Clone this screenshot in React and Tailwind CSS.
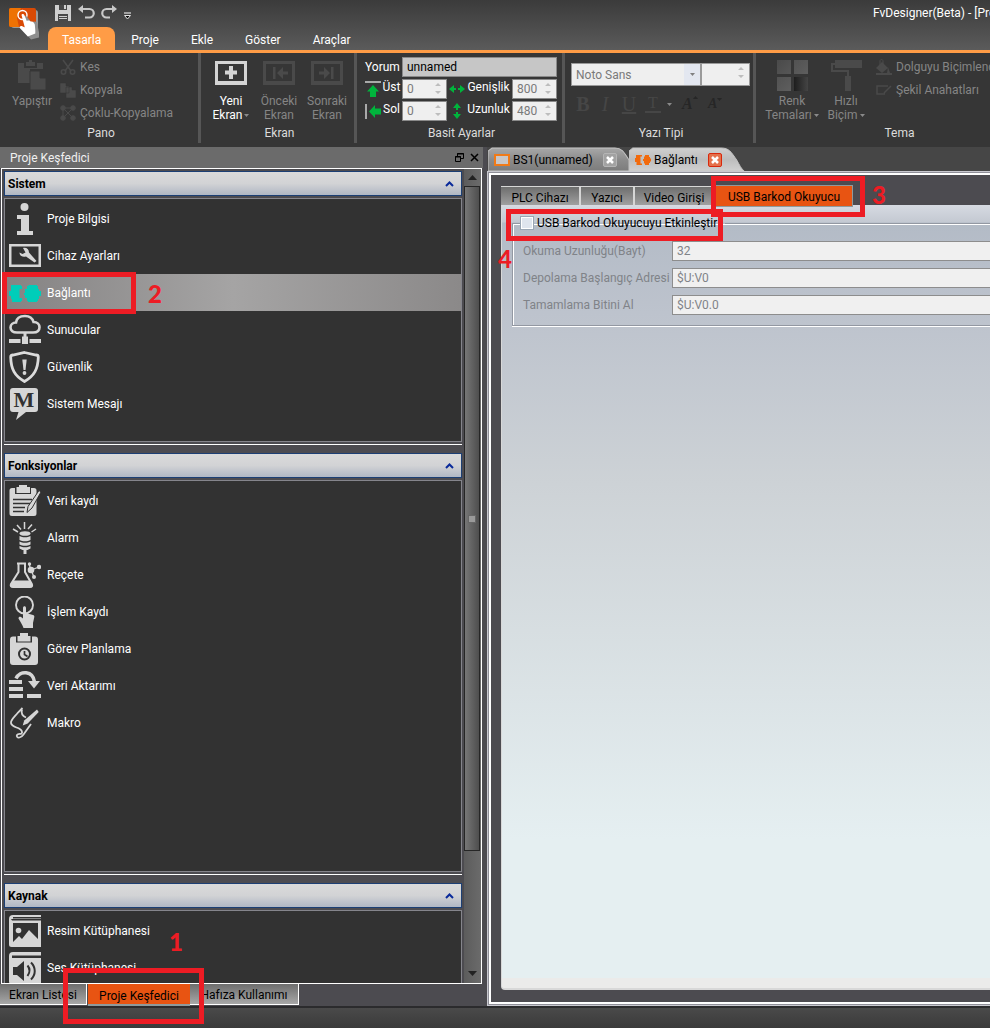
import React, { useState } from "react";
import clsx from "clsx";

const Icon = ({ children, size = 32, className }) => (
  <svg width={size} height={size} viewBox={`0 0 ${size} ${size}`} fill="#d6d6d6" className={clsx("shrink-0", className)} aria-hidden="true">
    {children}
  </svg>
);

/* PROJECT EXPLORER ICONS */
const icons = {
  info: (
    <Icon>
      <circle cx="15.5" cy="4" r="4" />
      <path d="M8 12h12v16h4v4H8v-4h4V16H8z" />
    </Icon>
  ),
  device: (
    <Icon>
      <path d="M0 4h32v23H0zM2.5 6.500v18h27v-18z" fillRule="evenodd" />
      <path d="M14 8c3-1 6 1 6 4.500l7.500 8.500-2 1.500L17 16.500c-3.500 1-6.500-.5-6.500-4l3 1.500 3-1.500z" />
    </Icon>
  ),
  link: (
    <Icon>
      <path fill="#00cdb9" d="M2 8h10v1h1v3h-2.500v9H13v3H12v1H3v-3H2v-3H0v-5h2zM20 8h8v1h1v3h1v2h2v5h-2v3h-1v2h-1v1h-9v-1h-1v-3h-2v-3h-1v-2h1v-4h2v-3h1z" />
    </Icon>
  ),
  server: (
    <Icon>
      <path d="M8 18.500c-4 0-6.500-2-6.500-5S4 8.500 7 8.500c.5-4 4-6.500 9-6.500s7.500 2.500 8.500 6c4 0 6 2.500 6 5.200 0 3.300-2.500 5.300-6.500 5.300z" fill="none" stroke="#d6d6d6" strokeWidth="2.600" />
      <path d="M14.500 19h3v4h-3zM0 25h11.500v4H0zM13 22.500h6V30h-6zM20.500 25H32v4H20.500z" />
    </Icon>
  ),
  shield: (
    <Icon>
      <path d="M15.500 1.500 27 4c1.500 0 2.300.5 2.300 2-.3 12-4 19-13.800 24.500C5.500 25 2 18 1.700 6c0-1.500.8-2 2.300-2z" fill="none" stroke="#dcdcdc" strokeWidth="2.800" />
      <path d="M13.300 8.500h4.400L16.500 19h-2z" />
      <circle cx="15.500" cy="22" r="1.900" />
    </Icon>
  ),
  message: (
    <Icon>
      <path d="M4 0h22a3 3 0 0 1 3 3v18a3 3 0 0 1-3 3H17L7 32l2.500-8H4a3 3 0 0 1-3-3V3a3 3 0 0 1 3-3z" />
      <text x="15" y="19" textAnchor="middle" fill="#323232" fontFamily="Liberation Serif, serif" fontWeight="bold" fontSize="22">M</text>
    </Icon>
  ),
  log: (
    <Icon>
      <path d="M3 3h3v6h16V3h3a2.500 2.500 0 0 1 2.500 2.500v23A2.500 2.500 0 0 1 25 31H3a2.500 2.500 0 0 1-2.500-2.500v-23A2.500 2.500 0 0 1 3 3z" />
      <path d="M7.500 2H10V0h8v2h3v6H7.500z" />
      <path d="M4 14.500h19M4 18.500h17M4 22.500h12M4 26.500h11" stroke="#323232" strokeWidth="1.500" />
      <path d="m30 5.500 2 1.500-9 16-5 4.500 1-6z" stroke="#323232" strokeWidth="1" />
    </Icon>
  ),
  alarm: (
    <Icon>
      <path d="m4 7 5 3M8 3l4 4.500M15.500 0v7M23 2.500 19 7M27 7l-4.500 3" stroke="#d6d6d6" strokeWidth="1.500" />
      <ellipse cx="16" cy="11.500" rx="5.500" ry="2.300" />
      <path d="M10.500 14c3 1.800 8 1.800 11 0v4c-3 1.800-8 1.800-11 0zM10.500 19.500c3 1.800 8 1.800 11 0v3c-3 1.800-8 1.800-11 0zM10.500 24c3 1.800 8 1.800 11 0v2.500L18.500 28h-1v4h-3v-4h-1l-3-1.500z" />
    </Icon>
  ),
  recipe: (
    <Icon>
      <path d="M8 4.500h9M9.500 5v8L2 25c-.8 1.800 0 3 2 3h17c2 0 2.600-1.200 1.800-3L16 13V5" fill="none" stroke="#d6d6d6" strokeWidth="2" />
      <path d="M4 21.500h17.500l2 5c0 1-1 1.500-2 1.500H3.500c-1.500 0-2-1-1.500-2z" />
      <path d="m20 5 2 6 8-3M22 11l3 7" stroke="#d6d6d6" strokeWidth="1.300" fill="none" />
      <circle cx="20.500" cy="5" r="1.700" />
      <circle cx="22" cy="11" r="3.300" />
      <circle cx="30" cy="8" r="2.200" />
      <circle cx="25" cy="18" r="2" />
    </Icon>
  ),
  touch: (
    <Icon>
      <circle cx="15.500" cy="9" r="8.500" fill="none" stroke="#d6d6d6" strokeWidth="1.900" />
      <path d="M14 12c0-2.500 3-2.500 3 0v5l7 2c1 .3 1.500 1 1.300 2L24 27v5h-9.500c-1-3-3-6-5-9.500 0-2 2-2.500 4.500 0z" />
    </Icon>
  ),
  schedule: (
    <Icon>
      <path d="M4 3.500h3v6h16v-6h3a3 3 0 0 1 3 3V29a3 3 0 0 1-3 3H4a3 3 0 0 1-3-3V6.500a3 3 0 0 1 3-3z" />
      <path d="M8.500 3H11V0h8v3h2.500v5.500h-13z" />
      <circle cx="15.500" cy="21" r="5.500" fill="none" stroke="#323232" strokeWidth="2" />
      <path d="M15.500 18v3.500l3 2" fill="none" stroke="#323232" strokeWidth="1.700" />
    </Icon>
  ),
  transfer: (
    <Icon>
      <path d="M0 10h13v4H0zM0 17h14v4H0zM0 24h14v4H0zM18 24h14v4H18z" />
      <path d="M7 8.500C11 0 24 .5 25.500 12" fill="none" stroke="#d6d6d6" strokeWidth="3.500" />
      <path d="M19 11h12l-6 7.500z" />
    </Icon>
  ),
  macro: (
    <Icon>
      <path d="M13.500 1 9 5.500C6 9.500 1.500 13 2 16c.5 3.500 5 4 8 5.500 2.500 1.500 4 3.500 2.500 5-1 .8-3.500 0-4.500 1.500-.8 1.500.5 3 2.500 2.500s3-1.500 4-3l7.500-10.500M13 2.500c-1 3.500.5 6.500 4 8" fill="none" stroke="#d6d6d6" strokeWidth="1.800" />
      <path d="m28 2.500 1.700 2.500-11 11.500-5 2 1.500-5z" />
    </Icon>
  ),
  image: (
    <Icon>
      <path d="M4 0h28v2H4v1.500h28V32H2.500A2.500 2.500 0 0 1 0 29.500V4a4 4 0 0 1 4-4zM4 8v19h25V8z" fillRule="evenodd" />
      <path d="M2 4h30v1.500H3z" fill="#323232" />
      <circle cx="9.500" cy="15.500" r="2.800" />
      <path d="m4 27 6-6 3 3 7-9 9 9v4H4z" />
    </Icon>
  ),
  sound: (
    <Icon>
      <path d="M4 0h28v32H2.500A2.500 2.500 0 0 1 0 29.500V4a4 4 0 0 1 4-4z" />
      <path d="M3 3.500h29V6H3z" fill="#323232" />
      <path d="M4 15h4l7-6v20l-7-6H4z" fill="#323232" />
      <path d="M18.500 13.500c2.500 3 2.500 7 0 10.500M22 10.500c5 5 5 12 0 17" fill="none" stroke="#323232" strokeWidth="2" />
    </Icon>
  )
};

const sections = [
  {
    title: "Sistem",
    pad: "pb-[19px]",
    items: [
      { icon: "info", label: "Proje Bilgisi" },
      { icon: "device", label: "Cihaz Ayarları" },
      { icon: "link", label: "Bağlantı", active: true },
      { icon: "server", label: "Sunucular" },
      { icon: "shield", label: "Güvenlik" },
      { icon: "message", label: "Sistem Mesajı" }
    ]
  },
  {
    title: "Fonksiyonlar",
    pad: "pb-[130px]",
    items: [
      { icon: "log", label: "Veri kaydı" },
      { icon: "alarm", label: "Alarm" },
      { icon: "recipe", label: "Reçete" },
      { icon: "touch", label: "İşlem Kaydı" },
      { icon: "schedule", label: "Görev Planlama" },
      { icon: "transfer", label: "Veri Aktarımı" },
      { icon: "macro", label: "Makro" }
    ]
  },
  {
    title: "Kaynak",
    pad: "pb-4",
    items: [
      { icon: "image", label: "Resim Kütüphanesi" },
      { icon: "sound", label: "Ses Kütüphanesi" }
    ]
  }
];

const CalloutNumber = ({ children, className }) => (
  <span className={clsx("absolute z-20 font-['Lato',sans-serif] text-2xl leading-6 font-black text-[#ed1c24] pointer-events-none", className)}>
    {children}
  </span>
);

/* Numbered red frame laid over the control it points at */
const Callout = ({ number, frame, numberAt }) => (
  <>
    <span className={clsx("absolute z-20 border-[5px] border-[#ed1c24] pointer-events-none", frame)} />
    {number && <CalloutNumber className={numberAt}>{number}</CalloutNumber>}
  </>
);

const Caret = ({ className }) => (
  <svg width="5" height="3" viewBox="0 0 5 3" fill="currentColor" className={clsx("inline-block", className)} aria-hidden="true">
    <path d="M0 0h5L2.500 3z" />
  </svg>
);

const SpinArrows = () => (
  <svg width="6" height="11" viewBox="0 0 6 11" fill="#bdbdbd" className="absolute right-1.5 top-1" aria-hidden="true">
    <path d="M3 0l3 3H0zM0 8h6l-3 3z" />
  </svg>
);

const RibbonGroup = ({ title, className, children }) => (
  <section className={clsx("flex flex-col shrink-0 border-r-[3px] border-[#565656] h-[90px]", className)}>
    <div className="flex-1 min-h-0">{children}</div>
    <h2 className="h-5 leading-5 pl-1 text-center text-[#dcdcdc]">{title}</h2>
  </section>
);

const BigButton = ({ icon, lines, caret, enabled, className }) => (
  <button type="button" disabled={!enabled} className={clsx("flex flex-col items-center w-12 leading-[14px]", enabled ? "text-white" : "text-[#858585]", className)}>
    <span className="h-10 pt-1.5">{icon}</span>
    <span className="whitespace-nowrap">{lines[0]}</span>
    {lines[1] && (
      <span className="whitespace-nowrap">
        {lines[1]}
        {caret && <Caret className="ml-0.5 mb-px text-[#8a8a8a]" />}
      </span>
    )}
  </button>
);

const SmallButton = ({ icon, label }) => (
  <button type="button" disabled className="flex items-center gap-1 h-[23px] text-[#858585] whitespace-nowrap">
    {icon}
    {label}
  </button>
);

const SpinField = ({ id, label, icon, value, wide }) => (
  <div className="flex items-center h-[22px]">
    {icon}
    <label htmlFor={id} className={clsx("pb-1 text-white text-center whitespace-nowrap", wide ? "w-[47px]" : "w-[21px]")}>{label}</label>
    <span className="relative block">
      <input id={id} type="text" defaultValue={value} disabled className="block w-[45px] h-5 px-1 bg-[#efefef] border border-[#8a8a8a] text-[#7a7a7a]" />
      <SpinArrows />
    </span>
  </div>
);

const TitleBar = () => {
  const [tab, setTab] = useState("Tasarla");
  return (
    <header className="relative shrink-0 h-[53px] bg-linear-to-b from-[#3b3b3b] to-[#5b5b5b] border-b-[3px] border-[#ff9c46] flex flex-col justify-between text-white">
      <svg width="34" height="36" viewBox="0 0 34 36" className="absolute left-2 top-1.5" aria-hidden="true">
        <rect x="3" y="4" width="27" height="18" rx="3" fill="#9a9a9a" />
        <rect x="1" y="2" width="27" height="19" rx="2" fill="#d94a05" />
        <path d="M3 2h10L9 12l2 9H3a2 2 0 0 1-2-2V4a2 2 0 0 1 2-2z" fill="#ee7203" />
        <circle cx="14.500" cy="9" r="4.500" fill="none" stroke="#fff" strokeWidth="1.400" />
        <path d="M16 11c1-2 3-1 4 1l3 4 4-.5c2 0 3 3 3 6l1 5v5l-8 2-8-9c-1-2 1-3 3-1.500l3 2z" fill="#8f8f8f" />
        <path d="M13.500 9c0-1.500 2.300-1.500 2.800 0l2.500 6c2-1 3 0 4 .5 2-.5 3.500 1 4 3l.5 6v3l-7.500 3-8-8.500c-.5-1.800 1-2.500 3-1.500l2 1z" fill="#fff" />
      </svg>
      <div className="flex items-center h-[26px] pl-[55px]">
        <svg width="76" height="18" viewBox="0 0 76 18" className="shrink-0" aria-label="Hızlı erişim">
          <path d="M0 1h16v16H0z" fill="#cfcfcf" />
          <path d="M4 1h8v5H4zM3 10h10v7H3z" fill="#484848" />
          <path d="M9 1h2v4H9zM4 12h8v1H4zM4 14h8v1H4z" fill="#cfcfcf" />
          <path d="M27 5h7.500a4.200 4.200 0 0 1 0 8.500H30M59 5h-7.500a4.200 4.200 0 0 0 0 8.500H55" fill="none" stroke="#c8c8c8" strokeWidth="2.200" />
          <path d="M23 5 28 1v8zM62 5 57 1v8z" fill="#c8c8c8" />
          <path d="M69 9h7" stroke="#fff" />
          <path d="M69.500 11.500h6l-3 3.500z" stroke="#e0e0e0" fill="#111" />
        </svg>
        <h1 className="ml-auto w-[117px] overflow-hidden whitespace-nowrap">FvDesigner(Beta) - [Proje</h1>
      </div>
      <nav className="flex h-[23px] pl-12">
        {["Tasarla", "Proje", "Ekle", "Göster", "Araçlar"].map((name) => (
          <button
            key={name}
            type="button"
            onClick={() => setTab(name)}
            className={clsx("leading-[26px]", tab === name ? "px-3.5 bg-[#ff9c46] rounded-t-lg" : "px-4")}
          >
            {name}
          </button>
        ))}
      </nav>
    </header>
  );
};

const dim = "#4a4a4a";

const Ribbon = () => (
  <div className="shrink-0 h-[94px] bg-[#363636] flex items-start overflow-hidden">
    {/* CLIPBOARD */}
    <RibbonGroup title="Pano" className="w-[201px]">
      <div className="flex">
        <BigButton
          className="ml-2 pt-px"
          lines={["Yapıştır"]}
          icon={
            <svg width="28" height="30" viewBox="0 0 28 30" fill={dim}>
              <path d="M0 3h6v5h13V3h6v6H12v14H0zM8 2h3V0h3v2h3v4H8z" />
              <path d="M12 11h10v7h6v12H12z" stroke="#363636" />
            </svg>
          }
        />
        <div className="flex flex-col ml-1 pt-0.5">
          <SmallButton
            label="Kes"
            icon={
              <svg width="16" height="16" viewBox="0 0 16 16" fill="none" stroke={dim} strokeWidth="1.600">
                <path d="m3 1 8 11M13 1 5 12" />
                <circle cx="3.500" cy="13" r="2.200" />
                <circle cx="12.500" cy="13" r="2.200" />
              </svg>
            }
          />
          <SmallButton
            label="Kopyala"
            icon={
              <svg width="16" height="16" viewBox="0 0 16 16" fill={dim}>
                <path d="M0 1h6v3h3v7H0zM6 5h6v3h4v8H6z" stroke="#363636" strokeWidth=".6" />
              </svg>
            }
          />
          <SmallButton
            label="Çoklu-Kopyalama"
            icon={
              <svg width="16" height="16" viewBox="0 0 16 16" fill={dim} stroke={dim}>
                <path d="M3 3h10M3 13 13 3M3 3v10M3 3l10 10" />
                <circle cx="3" cy="3" r="2.300" />
                <circle cx="13" cy="3" r="2.300" />
                <circle cx="3" cy="13" r="2.300" />
                <circle cx="13" cy="13" r="2.300" />
              </svg>
            }
          />
        </div>
      </div>
    </RibbonGroup>

    {/* SCREEN */}
    <RibbonGroup title="Ekran" className="w-[156px]">
      <div className="flex pl-1.5 pt-px">
        <BigButton
          enabled
          caret
          lines={["Yeni", "Ekran"]}
          icon={
            <svg width="32" height="25" viewBox="0 0 32 25" fill="#d4d4d4">
              <path d="M0 1h32v24H0zM3 4v17h26V4z" fillRule="evenodd" />
              <path d="M14 6h4v4.500h4v4h-4V19h-4v-4.500h-4v-4h4z" />
            </svg>
          }
        />
        <BigButton
          lines={["Önceki", "Ekran"]}
          icon={
            <svg width="32" height="25" viewBox="0 0 32 25" fill={dim}>
              <path d="M0 1h32v24H0zM3 4v17h26V4z" fillRule="evenodd" />
              <path d="M10 7h2.500v12H10zM14 13l6-6v4.500h5v3h-5V19z" />
            </svg>
          }
        />
        <BigButton
          lines={["Sonraki", "Ekran"]}
          icon={
            <svg width="32" height="25" viewBox="0 0 32 25" fill={dim}>
              <path d="M0 1h32v24H0zM3 4v17h26V4z" fillRule="evenodd" />
              <path d="M20 7h2.500v12H20zM19 13l-6-6v4.500H8v3h5V19z" />
            </svg>
          }
        />
      </div>
    </RibbonGroup>

    {/* BASIC SETTINGS */}
    <RibbonGroup title="Basit Ayarlar" className="w-[208px]">
      <div className="pl-2 pt-[3px]">
        <div className="flex items-center h-[22px]">
          <label htmlFor="comment" className="w-[37px] text-white">Yorum</label>
          <input id="comment" type="text" defaultValue="unnamed" className="w-[155px] h-5 px-1 bg-[#c6c6c6] border border-[#8a8a8a] text-black" />
        </div>
        <div className="flex gap-0.5">
          <div>
            <SpinField id="top" label="Üst" value="0" icon={
              <svg width="16" height="17" viewBox="0 0 16 17"><path d="M0 0h16v2H0z" fill="#a9a9a9" /><path d="M8 4l6 6.500h-3V16H5v-5.500H2z" fill="#00b43c" /></svg>
            } />
            <SpinField id="left" label="Sol" value="0" icon={
              <svg width="16" height="17" viewBox="0 0 16 17"><path d="M0 1h2v15H0z" fill="#a9a9a9" /><path d="M4 8.500 10 2v3.500h6v6h-6V15z" fill="#00b43c" /></svg>
            } />
          </div>
          <div>
            <SpinField wide id="width" label="Genişlik" value="800" icon={
              <svg width="16" height="16" viewBox="0 0 16 16" fill="#00b43c"><path d="M0 8l5-4v3h2v2H5v3zM16 8l-5-4v3H9v2h2v3z" /></svg>
            } />
            <SpinField wide id="height" label="Uzunluk" value="480" icon={
              <svg width="16" height="16" viewBox="0 0 16 16" fill="#00b43c"><path d="M8 0l4 5H9v2H7V5H4zM8 16l4-5H9V9H7v2H4z" /></svg>
            } />
          </div>
        </div>
      </div>
    </RibbonGroup>

    {/* FONT */}
    <RibbonGroup title="Yazı Tipi" className="w-[191px]">
      <div className="pl-1.5 pt-2.5">
        <div className="flex">
          <span className="relative block">
            <select disabled aria-label="Yazı tipi" className="block appearance-none w-[130px] h-[23px] px-1 bg-[#efefef] border border-[#9a9a9a] text-[#7a7a7a] opacity-100">
              <option>Noto Sans</option>
            </select>
            <span className="absolute right-px top-px w-4 h-[21px] bg-[#e3e7f0] flex items-center justify-center text-[#808080]">
              <Caret />
            </span>
          </span>
          <span className="relative block">
            <input type="text" disabled aria-label="Yazı boyutu" className="block w-[49px] h-[23px] px-1 bg-[#efefef] border border-[#9a9a9a]" />
            <SpinArrows />
          </span>
        </div>
        <div className="flex items-center gap-1.5 h-9 pl-1 font-['Liberation_Serif',serif] text-xl text-[#464646]">
          <button type="button" disabled className="w-4 font-bold">B</button>
          <button type="button" disabled className="w-4 italic">I</button>
          <button type="button" disabled className="w-5 underline">U</button>
          <button type="button" disabled className="flex items-center gap-1.5 text-base">
            <span className="border-b-2 border-current w-4 leading-4">T</span>
            <Caret className="text-[#8a8a8a]" />
          </button>
          <button type="button" disabled className="flex w-5 ml-1 italic font-bold text-base text-[#262626]">
            A
            <Caret className="rotate-180 mt-1" />
          </button>
          <button type="button" disabled className="flex w-4 italic font-bold text-sm text-[#262626]">
            A
            <Caret className="mt-1" />
          </button>
        </div>
      </div>
    </RibbonGroup>

    {/* THEME */}
    <RibbonGroup title="Tema" className="w-[286px]">
      <div className="flex gap-1.5 pl-3">
        <BigButton
          caret
          className="pt-px"
          lines={["Renk", "Temaları"]}
          icon={
            <svg width="31" height="31" viewBox="0 0 31 31">
              <defs>
                <linearGradient id="tile" x1="0" y1="0" x2="1" y2="1"><stop offset="0" stopColor="#4a4a4a" /><stop offset="1" stopColor="#666" /></linearGradient>
                <linearGradient id="tileDark" x1="0" y1="0" x2="1" y2="0"><stop offset="0" stopColor="#1e1e1e" /><stop offset="1" stopColor="#444" /></linearGradient>
              </defs>
              <path d="M0 0h14v14H0zM17 0h14v14H17zM0 17h14v14H0z" fill="url(#tile)" />
              <path d="M17 17h14v14H17z" fill="url(#tileDark)" />
            </svg>
          }
        />
        <BigButton
          caret
          className="pt-px"
          lines={["Hızlı", "Biçim"]}
          icon={
            <svg width="32" height="31" viewBox="0 0 32 31" fill={dim}>
              <path d="M5 0h27v8H5zM15 16h6v15h-6z" />
              <path d="M5 4H2v7h16v5" fill="none" stroke={dim} strokeWidth="2" />
            </svg>
          }
        />
        <div className="flex flex-col pt-0.5">
          <SmallButton
            label="Dolguyu Biçimlendir"
            icon={
              <svg width="16" height="16" viewBox="0 0 16 16" fill={dim}>
                <path d="m0 9 6-6 6 6-6 5zM12 8l2 6h-3zM0 14h16v2H0z" />
                <path d="M4 6V2c0-2 3-2 3 0v3" fill="none" stroke={dim} />
              </svg>
            }
          />
          <SmallButton
            label="Şekil Anahatları"
            icon={
              <svg width="16" height="16" viewBox="0 0 16 16" fill="none" stroke={dim} strokeWidth="1.500">
                <path d="M9 12H1V4h11M8 11l7-7" />
              </svg>
            }
          />
        </div>
      </div>
    </RibbonGroup>
  </div>
);

const SectionHeader = ({ title }) => (
  <h3>
    <button type="button" className="flex items-center justify-between w-full h-[25px] pl-[3px] pr-[7px] bg-linear-to-b from-[#dadada] via-[#d2d3d5] to-[#b0b7c4] border border-[#1c3f74] font-bold text-black">
      {title}
      <svg width="9" height="6" viewBox="0 0 9 6" fill="none" stroke="#0a2a9a" strokeWidth="2" aria-hidden="true">
        <path d="m1 5 3.500-3.500L8 5" />
      </svg>
    </button>
  </h3>
);

const ProjectExplorer = () => (
  <aside className="w-[483px] shrink-0 flex flex-col min-h-0 bg-[#4c4b50]">
    <div className="flex items-center justify-between h-[21px] shrink-0 pl-2.5 pr-1 bg-[#6b6b6b] text-[#f0f0f0]">
      <h2>Proje Keşfedici</h2>
      <div className="flex gap-1.5">
        <button type="button" aria-label="Ayır">
          <svg width="9" height="9" viewBox="0 0 9 9" fill="none" stroke="#000"><path d="M2.500 3V.5h6v5H6M2 1h7M.5 3.500h5v5h-5zM0 4h6" /></svg>
        </button>
        <button type="button" aria-label="Kapat">
          <svg width="9" height="9" viewBox="0 0 9 9" stroke="#000" strokeWidth="1.500"><path d="m1 1 7 7M8 1 1 8" /></svg>
        </button>
      </div>
    </div>

    <div className="flex flex-1 min-h-0 mx-px border border-white">
      <div className="flex-1 min-w-0 overflow-hidden pl-0.5 pt-0.5 pr-0.5">
        {sections.map((section) => (
          <div key={section.title} className="mb-2">
            <SectionHeader title={section.title} />
            <div className="mt-0.5 pb-0.5 border-b border-white">
              <ul className={clsx("bg-[#323232] border border-[#85858c] pt-px", section.pad)}>
                {section.items.map((item) => (
                  <li key={item.label} className="relative">
                    <a
                      href="#"
                      className={clsx("flex items-center h-[37px] pl-1 gap-1.5 text-white", item.active && "bg-linear-to-r from-[#858383] via-[#a5a4a4] to-[#8b8989]")}
                    >
                      {icons[item.icon]}
                      {item.label}
                    </a>
                    {item.active && <Callout number="2" frame="-left-[3px] -top-0.5 w-[134px] h-[42px]" numberAt="left-[143px] top-2" />}
                    {item.icon === "image" && <CalloutNumber className="left-[164px] top-[18px]">1</CalloutNumber>}
                  </li>
                ))}
              </ul>
            </div>
          </div>
        ))}
      </div>

      {/* SCROLLBAR */}
      <div className="w-[17px] shrink-0 flex flex-col bg-linear-to-r from-[#5c5c5c] to-[#6b6b6b]">
        <svg width="17" height="17" viewBox="0 0 17 17" className="shrink-0"><path d="M4 11h9L8.500 6z" fill="#222" /></svg>
        <div className="flex items-center justify-center h-[665px] mr-px border border-[#262626] bg-linear-to-r from-[#777] to-[#4e4e4e]">
          <span className="w-2 h-2 bg-[#9a9a9a] border border-[#666]" />
        </div>
        <svg width="17" height="17" viewBox="0 0 17 17" className="shrink-0 mt-auto"><path d="M4 5h9l-4.500 5z" fill="#222" /></svg>
      </div>
    </div>

    <nav className="flex h-[22px] shrink-0 text-black whitespace-nowrap">
      <button type="button" className="w-[87px] h-[21px] pt-0.5 bg-linear-to-b from-[#6e6e6e] to-[#a8a8a8] border-r border-b border-white">Ekran Listesi</button>
      <span className="relative">
        <button type="button" className="w-[102px] ml-px h-[22px] pt-1 bg-[#e85412] border-b-2 border-[#8f9a9c]">Proje Keşfedici</button>
        <Callout frame="-left-6 -top-4 w-[141px] h-14" />
      </span>
      <button type="button" className="w-[109px] h-[21px] pt-0.5 bg-linear-to-b from-[#6e6e6e] to-[#a8a8a8] border-r border-b border-white">Hafıza Kullanımı</button>
    </nav>
  </aside>
);

const DocTab = ({ active, icon, label, width }) => (
  <div className={clsx("relative flex items-center h-6 pt-px text-black", width)}>
    <svg viewBox="0 0 140 24" preserveAspectRatio="none" className="absolute inset-0 w-full h-full" aria-hidden="true">
      <defs>
        <linearGradient id={active ? "tabOn" : "tabOff"} x1="0" y1="0" x2="0" y2="1">
          <stop offset="0" stopColor={active ? "#cfcfcf" : "#a8a8a8"} />
          <stop offset=".5" stopColor={active ? "#bdbdbd" : "#8c8c8c"} />
          <stop offset="1" stopColor={active ? "#d0d0d0" : "#7c7c7c"} />
        </linearGradient>
      </defs>
      <path d={active ? "M0 24V4L4 1h95c9 0 11 4 17 12 3 5 5 9 8 11z" : "M0 24V4L4 1h122c7 0 9 4 14 12v11z"} fill={active ? "url(#tabOn)" : "url(#tabOff)"} stroke="#c4c4c4" />
    </svg>
    <span className="relative flex items-center pl-1.5">
      {icon}
      <button type="button" className="whitespace-nowrap ml-[3px]">{label}</button>
      <button type="button" aria-label="Kapat" className="ml-2.5">
        <svg width="14" height="14" viewBox="0 0 14 14">
          <rect x=".5" y=".5" width="13" height="13" rx="1.500" fill={active ? "#e4714c" : "#a2a2a2"} stroke={active ? "#d8280c" : "#b5b5b5"} />
          <path d="m4 4 6 6M10 4l-6 6" stroke="#fff" strokeWidth="2.500" />
        </svg>
      </button>
    </span>
  </div>
);

const fields = [
  { id: "read-length", label: "Okuma Uzunluğu(Bayt)", value: "32" },
  { id: "start-address", label: "Depolama Başlangıç Adresi", value: "$U:V0" },
  { id: "done-bit", label: "Tamamlama Bitini Al", value: "$U:V0.0" }
];

const Workspace = () => {
  const [enabled, setEnabled] = useState(false);
  const tabClass = "h-[19px] pt-[3px] leading-4 bg-linear-to-b from-[#6e6e6e] to-[#a0a0a0] border-t border-r-2 border-[#d6d6d6] text-black";
  return (
    <main className="flex-1 min-w-0 flex flex-col ml-1 bg-[#464646]">
      <div className="flex shrink-0 pl-px">
        <DocTab
          width="w-[141px]"
          label="BS1(unnamed)"
          icon={
            <svg width="16" height="12" viewBox="0 0 16 12"><rect x="1" y="1" width="14" height="10" fill="#c9c6c6" stroke="#f07a18" strokeWidth="2" /></svg>
          }
        />
        <DocTab
          active
          width="w-[130px]"
          label="Bağlantı"
          icon={
            <svg width="16" height="10" viewBox="0 0 16 10" fill="#f26a0c"><path d="M1 0h6v1.500H5.500v7H7V10H1.500V7H0V3h1zM10 0h4v2h1v1.500h1v3h-1V8h-1v2h-4V8.500H9V6H8V4h1V1.500h1z" /></svg>
          }
        />
      </div>

      <div className="flex-1 min-h-0 flex border-l border-y border-[#c9c9d0]">
        <div className="flex-1 min-w-0 flex border-l border-y border-[#8f8f98]">
          <div className="flex-1 min-w-0 flex flex-col border-l-2 border-y-2 border-white bg-[#4c4b50] pl-2.5 pt-2.5 pb-3">
            {/* PAGE TABS */}
            <nav className="flex items-end shrink-0 whitespace-nowrap">
              <button type="button" className={clsx(tabClass, "w-[80px]")}>PLC Cihazı</button>
              <button type="button" className={clsx(tabClass, "w-[54px]")}>Yazıcı</button>
              <button type="button" className={clsx(tabClass, "w-20 border-r-0")}>Video Girişi</button>
              <span className="relative z-10 -mb-0.5">
                <button type="button" className="block w-[138px] h-[22px] pt-px bg-[#e85412] border border-[#8f9a9c] text-black">USB Barkod Okuyucu</button>
                <Callout number="3" frame="-left-1 -top-[9px] w-[154px] h-[41px]" numberAt="left-[157px] -top-0.5" />
              </span>
            </nav>

            <div className="flex-1 min-h-0 flex flex-col bg-[#ebebea] border-l border-b-2 border-[#d8d8d8] rounded-bl-sm pb-2.5">
              <div className="flex-1 bg-[linear-gradient(to_bottom,#d6dae2_0,#c4c9d2_17px,#b3bbc6_18px,#bdc3cd_14%,#cdd2d6_36%,#e5eff1_82%)] pl-2.5 pt-2">
                <div className="relative">
                  <fieldset className="border border-r-0 border-[#9398a2] shadow-[inset_1px_1px_0_#fff,0_1px_0_#fff] pl-2 pb-2.5">
                    <legend className="h-5">
                      <label className="flex items-center h-5 gap-1 pr-2 text-black whitespace-nowrap">
                        <input type="checkbox" checked={enabled} onChange={() => setEnabled(!enabled)} className="appearance-none w-3 h-3 bg-[#dfe5ee] border border-white outline outline-[#9aa6b4] checked:bg-[#3b6ea5]" />
                        USB Barkod Okuyucuyu Etkinleştir
                      </label>
                    </legend>
                    <div className="flex flex-col gap-[7px] pt-2">
                      {fields.map((field) => (
                        <div key={field.id} className="flex items-center">
                          <label htmlFor={field.id} className="w-[151px] pl-0.5 shrink-0 text-[#808388] whitespace-nowrap">{field.label}</label>
                          <input id={field.id} type="text" disabled={!enabled} defaultValue={field.value} className="flex-1 min-w-0 h-5 px-1 bg-[#f0f0f0] border border-r-0 border-[#8d8d8d] text-[#808388]" />
                        </div>
                      ))}
                    </div>
                  </fieldset>
                  <Callout number="4" frame="-left-1.5 -top-1 w-[217px] h-8" numberAt="-left-3.5 top-[34px]" />
                </div>
              </div>
            </div>
          </div>
        </div>
      </div>
    </main>
  );
};

export default function App() {
  return (
    <div className="h-screen flex flex-col overflow-hidden bg-[#4c4b50] font-['Roboto',sans-serif] text-xs">
      <TitleBar />
      <Ribbon />
      <div className="flex flex-1 min-h-0">
        <ProjectExplorer />
        <Workspace />
      </div>
      <footer className="shrink-0 h-[22px] border-t-2 border-[#2b2b2d] bg-linear-to-b from-[#4a4a4a] to-[#3a3a3a]" />
    </div>
  );
}
